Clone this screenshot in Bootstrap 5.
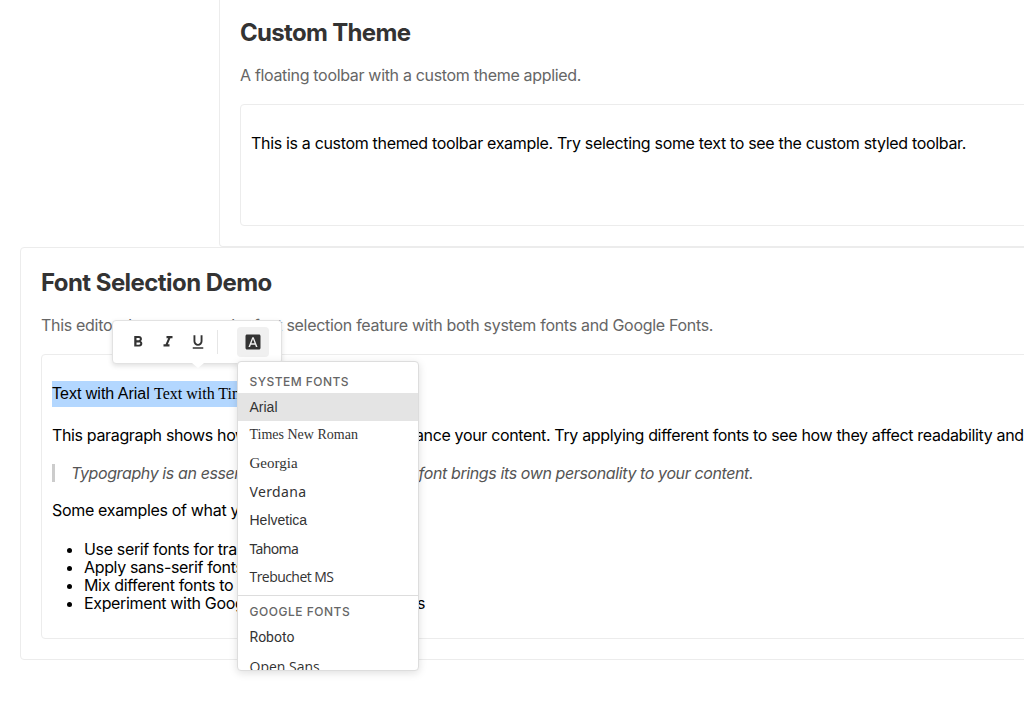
<!DOCTYPE html>
<html lang="en">
<head>
<meta charset="utf-8">
<meta name="viewport" content="width=device-width, initial-scale=1">
<title>Floating toolbar – font selection</title>
<link href="https://cdn.jsdelivr.net/npm/bootstrap@5.3.0/dist/css/bootstrap.min.css" rel="stylesheet">
<style>
  body { font-family: Inter, "Liberation Sans", sans-serif; font-size: 16px; letter-spacing: -.325px; color: #000; line-height: 1.6; }
  .stage { height: 720px; }
  .demo { width: 1200px; border: 1px solid #ececec; border-radius: 4px; padding: 20px; }
  .demo-custom { margin-left: 219px; border-top: 0; border-radius: 0 0 4px 4px; padding-top: 19px; }
  .demo-fonts { margin-left: 20px; }
  .demo h2 { font-size: 24px; font-weight: 700; line-height: 28px; letter-spacing: -.68px; color: #333; margin: 0 0 15px; }
  .demo .h-second { padding-top: 1px; letter-spacing: -.56px; }
  .demo .intro { color: #666; line-height: 26px; margin: 0 0 16px; }
  .demo-fonts .intro { letter-spacing: -.305px; }
  .editor { border: 1px solid #ececec; border-radius: 4px; padding: 10px; }
  .editor p { line-height: 25.6px; margin: 16px 0; }
  .editor .body-text { letter-spacing: -.35px; }
  .editor-short { height: 122px; }
  .editor blockquote { font-size: 16px; line-height: 18px; border-left: 3px solid #ccc; padding-left: 16px; margin: 16px 0; color: #555; font-style: italic; letter-spacing: -.39px; }
  .editor ul { line-height: 18px; margin: 16px 0; padding-left: 32px; letter-spacing: -.345px; }
  .picked { background: #b3d7ff; width: 300px; height: 25.6px; }
  .f-arial { font-family: "Liberation Sans", sans-serif; letter-spacing: 0; }
  .f-times { font-family: "Liberation Serif", serif; letter-spacing: 0; }
  .f-georgia { font-family: "Liberation Serif", serif; font-size: 15px; letter-spacing: 0; }
  .f-verdana { font-family: "Noto Sans", sans-serif; letter-spacing: .36px; }
  .f-tahoma { font-family: "Noto Sans", sans-serif; letter-spacing: -.65px; }
  .f-trebuchet { font-family: "Open Sans", sans-serif; letter-spacing: -.55px; }
  .f-roboto { font-family: Roboto, sans-serif; letter-spacing: 0; }
  .f-opensans { font-family: "Open Sans", sans-serif; letter-spacing: 0; }
  .float-bar { left: 112px; top: 320px; width: 170px; height: 44px; background: #fff; border: 1px solid #e2e2e2; border-radius: 4px; box-shadow: 0 2px 5px rgba(0,0,0,.12); padding: 6px 10px; }
  .float-bar::after { content: ""; position: absolute; left: 79px; top: 42px; border: 6px solid transparent; border-top: 5px solid #fff; border-bottom: 0; }
  .tool { width: 30px; height: 30px; border: 0; border-radius: 4px; background: none; padding: 0; color: #333; }
  .tool.on { width: 32px; background: #f0f0f0; padding-right: 1px; }
  .tool svg { width: 18px; height: 18px; fill: currentColor; display: block; }
  .rule { width: 1px; height: 24px; background: #e6e6e6; margin: 0 19px 0 4px; }
  .font-menu { left: 237px; top: 361px; width: 182px; height: 310px; background: #fff; border: 1px solid #ddd; border-radius: 4px; box-shadow: 0 2px 8px rgba(0,0,0,.13); overflow: hidden; font-size: 14px; color: #333; }
  .font-menu h6 { font-size: 12px; font-weight: 500; color: #666; line-height: 15px; letter-spacing: .45px; margin: 0; padding: 12px 11.5px 4px; }
  .font-menu .second { border-top: 1px solid #ddd; margin-top: 4px; padding-top: 8px; letter-spacing: .52px; }
  .font-menu .pick { height: 28.4px; line-height: 28px; padding: 0 11.5px; white-space: nowrap; }
  .font-menu .pick.on { background: #e4e4e4; height: 28px; }
  .font-menu .f-georgia { line-height: 29px; }
  .font-menu .f-opensans { line-height: 30px; }
</style>
</head>
<body>
<main class="stage position-relative overflow-hidden">
  <section class="demo demo-custom">
    <h2>Custom Theme</h2>
    <p class="intro">A floating toolbar with a custom theme applied.</p>
    <div class="editor editor-short">
      <p>This is a custom themed toolbar example. Try selecting some text to see the custom styled toolbar.</p>
    </div>
  </section>

  <section class="demo demo-fonts">
    <h2 class="h-second">Font Selection Demo</h2>
    <p class="intro">This editor demonstrates the font selection feature with both system fonts and Google Fonts.</p>
    <div class="editor">
      <p class="picked"><span class="f-arial">Text with Arial</span> <span class="f-times">Text with Times New Roman</span></p>
      <p class="body-text">This paragraph shows how different fonts can enhance your content. Try applying different fonts to see how they affect readability and style.</p>
      <blockquote>Typography is an essential part of design. Each font brings its own personality to your content.</blockquote>
      <p>Some examples of what you can do:</p>
      <ul>
        <li>Use serif fonts for traditional content</li>
        <li>Apply sans-serif fonts for modern looks</li>
        <li>Mix different fonts to create contrast</li>
        <li>Experiment with Google Fonts for unique styles</li>
      </ul>
    </div>
  </section>

  <div class="float-bar position-absolute d-flex align-items-center" role="toolbar">
    <button class="tool d-flex align-items-center justify-content-center" aria-label="Bold"><svg viewBox="0 0 24 24"><path d="M15.6 10.79c.97-.67 1.65-1.77 1.65-2.79 0-2.26-1.75-4-4-4H7v14h7.04c2.09 0 3.71-1.7 3.71-3.79 0-1.52-.86-2.82-2.15-3.42zM10 6.5h3c.83 0 1.5.67 1.5 1.5s-.67 1.5-1.5 1.5h-3v-3zm3.5 9H10v-3h3.5c.83 0 1.5.67 1.5 1.5s-.67 1.5-1.5 1.5z"/></svg></button>
    <button class="tool d-flex align-items-center justify-content-center" aria-label="Italic"><svg viewBox="0 0 24 24"><path d="M10 4v3h2.21l-3.42 8H6v3h8v-3h-2.21l3.42-8H18V4z"/></svg></button>
    <button class="tool d-flex align-items-center justify-content-center" aria-label="Underline"><svg viewBox="0 0 24 24"><path d="M12 17c3.31 0 6-2.69 6-6V3h-2.5v8c0 1.93-1.57 3.5-3.5 3.5S8.5 12.93 8.5 11V3H6v8c0 3.31 2.69 6 6 6zm-7 2v2h14v-2H5z"/></svg></button>
    <span class="rule"></span>
    <button class="tool on d-flex align-items-center justify-content-center" aria-label="Font"><svg viewBox="0 0 24 24"><path d="M9.93 13.5h4.14L12 7.98zM20 2H4c-1.1 0-2 .9-2 2v16c0 1.1.9 2 2 2h16c1.1 0 2-.9 2-2V4c0-1.1-.9-2-2-2zm-4.05 16.5l-1.14-3H9.17l-1.12 3H5.96l5.11-13h1.86l5.11 13h-2.09z"/></svg></button>
  </div>

  <div class="font-menu position-absolute">
    <h6>SYSTEM FONTS</h6>
    <div class="pick on f-arial">Arial</div>
    <div class="pick f-times">Times New Roman</div>
    <div class="pick f-georgia">Georgia</div>
    <div class="pick f-verdana">Verdana</div>
    <div class="pick f-arial">Helvetica</div>
    <div class="pick f-tahoma">Tahoma</div>
    <div class="pick f-trebuchet">Trebuchet MS</div>
    <h6 class="second">GOOGLE FONTS</h6>
    <div class="pick f-roboto">Roboto</div>
    <div class="pick f-opensans">Open Sans</div>
  </div>
</main>
<script src="https://cdn.jsdelivr.net/npm/bootstrap@5.3.0/dist/js/bootstrap.bundle.min.js"></script>
</body>
</html>
